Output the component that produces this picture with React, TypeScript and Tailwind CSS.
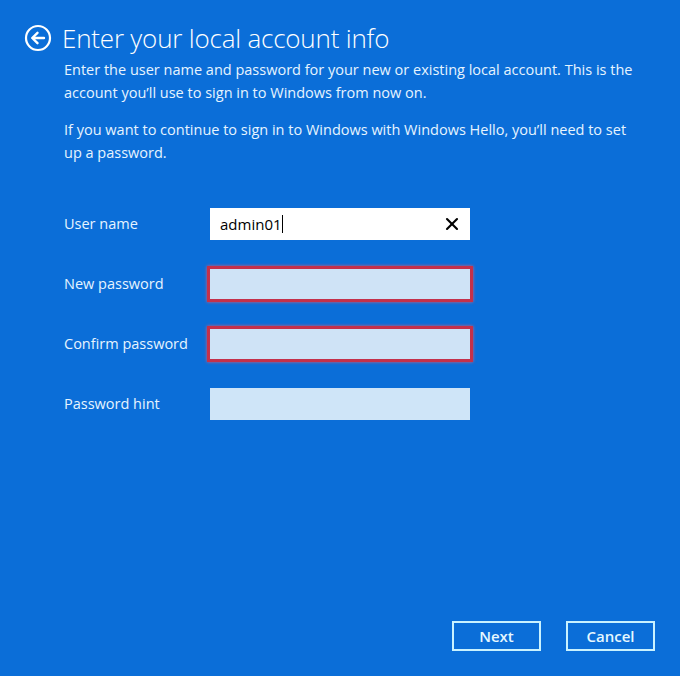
import { X } from 'lucide-react';

const font = { fontFamily: '"Open Sans", "Noto Sans", sans-serif' };

function Field({ label, value, error }: { label: string; value?: string; error?: boolean }) {
  return (
    <div className="flex items-center h-[60px]">
      <span className="w-[146px] text-[14.5px] text-[#e6f4ff]">{label}</span>
      {value !== undefined ? (
        <div className="w-[260px] h-[32px] bg-white flex items-center pl-[10px] pr-[8px]">
          <span className="text-[15px] text-black">{value}</span>
          <span className="w-px h-[18px] bg-black" />
          <X className="ml-auto" size={20} strokeWidth={2.5} color="#000" />
        </div>
      ) : error ? (
        <div className="w-[266px] h-[36px] -ml-[3px] border-[3px] border-[#c4314b] bg-[#cfe3f6] shadow-[0_0_3px_#e05a70]" />
      ) : (
        <div className="w-[260px] h-[32px] bg-[#cfe5f8]" />
      )}
    </div>
  );
}

export default function App() {
  return (
    <div className="w-[680px] h-[676px] bg-[#0b6ed8] flex flex-col text-white" style={font}>
      {/* Header */}
      <div className="flex items-center pl-[24px] pt-[22px]">
        <svg width="28" height="28" viewBox="0 0 28 28">
          <circle cx="14" cy="14" r="12" fill="none" stroke="white" strokeWidth="2.2" />
          <path d="M20 14H8.5M13.5 8.8L8.2 14l5.3 5.2" fill="none" stroke="white" strokeWidth="2.4" strokeLinecap="round" strokeLinejoin="round" />
        </svg>
        <h1 className="ml-[10px] text-[26px] font-light leading-[32px] tracking-[-0.2px]">Enter your local account info</h1>
      </div>

      <div className="pl-[64px] pr-[40px] mt-[4px] text-[14.5px] leading-[23px] text-[#e6f4ff]">
        <p>
          Enter the user name and password for your new or existing local account. This is the account you’ll use to
          sign in to Windows from now on.
        </p>
        <p className="mt-[14px]">
          If you want to continue to sign in to Windows with Windows Hello, you’ll need to set up a password.
        </p>
      </div>

      {/* Form */}
      <div className="pl-[64px] mt-[30px] flex flex-col">
        <Field label="User name" value="admin01" />
        <Field label="New password" error />
        <Field label="Confirm password" error />
        <Field label="Password hint" />
      </div>

      {/* Buttons */}
      <div className="mt-auto mb-[25px] flex justify-end gap-[25px] pr-[25px]">
        <button className="w-[89px] h-[30px] border-2 border-[#c9f2ff] text-[15px] font-semibold text-[#e6f8ff]">Next</button>
        <button className="w-[89px] h-[30px] border-2 border-[#c9f2ff] text-[15px] font-semibold text-[#e6f8ff]">Cancel</button>
      </div>
    </div>
  );
}
